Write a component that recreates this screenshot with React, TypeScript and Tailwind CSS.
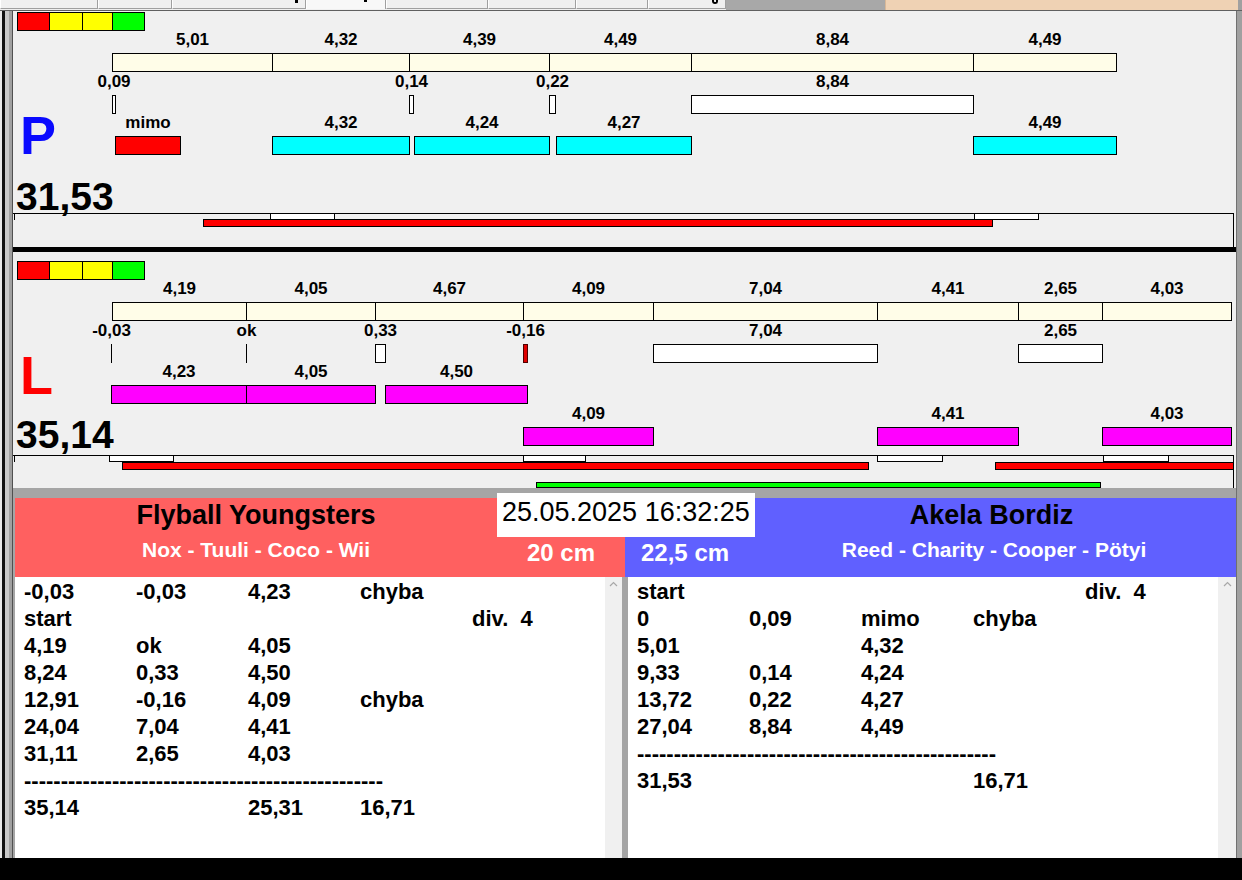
import React from 'react';

// left edge of the content area in page pixels; chart data is kept in page coordinates
const OX = 13;

type Kind = 'cream' | 'white' | 'cyan' | 'magenta' | 'red' | 'tinyred' | 'tick' | 'green' | 'line';

interface Item {
    a: number;
    b: number;
    y: number;
    h: number;
    kind: Kind;
    label?: string;
    ly?: number;
}

const kindClass: Record<Kind, string> = {
    cream: 'bg-[#fffde8] border border-black',
    white: 'bg-white border border-black',
    cyan: 'bg-[#00ffff] border border-black',
    magenta: 'bg-[#ff00ff] border border-black',
    red: 'bg-[#ff0000] border border-black',
    tinyred: 'bg-[#e00000] border border-[#500000]',
    tick: 'bg-black',
    green: 'bg-[#00ff00] border border-black',
    line: 'bg-black',
};

const row = (kind: Kind, y: number, ly: number, segs: [number, number, string?][]): Item[] =>
    segs.map(([a, b, label]) => ({ a, b, y, h: 19, kind, label, ly }));

const itemsP: Item[] = [
    ...row('cream', 53, 40, [
        [112, 272, '5,01'],
        [272, 409, '4,32'],
        [409, 549, '4,39'],
        [549, 691, '4,49'],
        [691, 973, '8,84'],
        [973, 1116, '4,49'],
    ]),
    ...row('white', 95, 82, [
        [112, 115, '0,09'],
        [409, 413, '0,14'],
        [549, 555, '0,22'],
        [691, 973, '8,84'],
    ]),
    ...row('red', 136, 123, [[115, 180, 'mimo']]),
    ...row('cyan', 136, 123, [
        [272, 409, '4,32'],
        [414, 549, '4,24'],
        [556, 691, '4,27'],
        [973, 1116, '4,49'],
    ]),
    // track
    { a: 13, b: 1233, y: 213, h: 1, kind: 'line' },
    { a: 1233, b: 1233, y: 213, h: 34, kind: 'line' },
    { a: 14, b: 14, y: 213, h: 7, kind: 'line' },
    { a: 270, b: 334, y: 213, h: 7, kind: 'white' },
    { a: 974, b: 1038, y: 213, h: 7, kind: 'white' },
    { a: 203, b: 992, y: 219, h: 8, kind: 'red' },
];

const itemsL: Item[] = [
    ...row('cream', 302, 289, [
        [112, 246, '4,19'],
        [246, 375, '4,05'],
        [375, 523, '4,67'],
        [523, 653, '4,09'],
        [653, 877, '7,04'],
        [877, 1018, '4,41'],
        [1018, 1102, '2,65'],
        [1102, 1231, '4,03'],
    ]),
    ...row('tick', 344, 331, [
        [111, 111, '-0,03'],
        [246, 246, 'ok'],
    ]),
    ...row('white', 344, 331, [[375, 385, '0,33']]),
    ...row('tinyred', 344, 331, [[523, 527, '-0,16']]),
    ...row('white', 344, 331, [
        [653, 877, '7,04'],
        [1018, 1102, '2,65'],
    ]),
    ...row('magenta', 385, 372, [
        [111, 246, '4,23'],
        [246, 375, '4,05'],
        [385, 527, '4,50'],
    ]),
    ...row('magenta', 427, 414, [
        [523, 653, '4,09'],
        [877, 1018, '4,41'],
        [1102, 1231, '4,03'],
    ]),
    // track
    { a: 13, b: 1233, y: 455, h: 1, kind: 'line' },
    { a: 1233, b: 1233, y: 455, h: 33, kind: 'line' },
    { a: 14, b: 14, y: 455, h: 7, kind: 'line' },
    { a: 109, b: 173, y: 455, h: 7, kind: 'white' },
    { a: 523, b: 585, y: 455, h: 7, kind: 'white' },
    { a: 877, b: 942, y: 455, h: 7, kind: 'white' },
    { a: 1103, b: 1168, y: 455, h: 7, kind: 'white' },
    { a: 122, b: 868, y: 462, h: 8, kind: 'red' },
    { a: 995, b: 1233, y: 462, h: 8, kind: 'red' },
    { a: 536, b: 1100, y: 482, h: 6, kind: 'green' },
];

const TrafficLight = () => (
    <div className="flex h-[19px] w-[128px] border border-black">
        <div className="w-[31px] bg-[#ff0000]" />
        <div className="w-[33px] bg-[#ffff00] border-l border-black" />
        <div className="w-[30px] bg-[#ffff00] border-l border-black" />
        <div className="flex-1 bg-[#00ff00] border-l border-black" />
    </div>
);

interface PanelProps {
    top: number;
    letter: string;
    letterClass: string;
    lightTop: number;
    letterMt: number;
    letterMl: number;
    total: string;
    totalMt: number;
    items: Item[];
}

const Panel: React.FC<PanelProps> = ({ top, letter, letterClass, lightTop, letterMt, letterMl, total, totalMt, items }) => (
    <div className="relative h-[236px] bg-[#f0f0f0]">
        <div className="flex flex-col items-start pl-[4px]" style={{ paddingTop: lightTop }}>
            <TrafficLight />
            <div
                className={`text-[54px] leading-[54px] font-bold ${letterClass}`}
                style={{ marginTop: letterMt, marginLeft: letterMl }}
            >
                {letter}
            </div>
            <div className="text-[39px] leading-[39px] font-bold text-black ml-[-1px]" style={{ marginTop: totalMt }}>
                {total}
            </div>
        </div>

        {items.map((it, i) => (
            <React.Fragment key={i}>
                <div
                    className={`absolute ${kindClass[it.kind]}`}
                    style={{ left: it.a - OX, top: it.y - top, width: it.b - it.a + 1, height: it.h }}
                />
                {it.label && it.ly !== undefined && (
                    <div
                        className="absolute w-[120px] text-center text-[17px] leading-[18px] font-bold text-black"
                        style={{ left: (it.a + it.b + 1) / 2 - 60 - OX, top: it.ly - 9 - top }}
                    >
                        {it.label}
                    </div>
                )}
            </React.Fragment>
        ))}
    </div>
);

const DASHES = '-'.repeat(49);

const leftRows: string[][] = [
    ['-0,03', '-0,03', '4,23', 'chyba'],
    ['start', '', '', '', 'div.  4'],
    ['4,19', 'ok', '4,05'],
    ['8,24', '0,33', '4,50'],
    ['12,91', '-0,16', '4,09', 'chyba'],
    ['24,04', '7,04', '4,41'],
    ['31,11', '2,65', '4,03'],
    [DASHES],
    ['35,14', '', '25,31', '16,71'],
];

const rightRows: string[][] = [
    ['start', '', '', '', 'div.  4'],
    ['0', '0,09', 'mimo', 'chyba'],
    ['5,01', '', '4,32'],
    ['9,33', '0,14', '4,24'],
    ['13,72', '0,22', '4,27'],
    ['27,04', '8,84', '4,49'],
    [DASHES],
    ['31,53', '', '', '16,71'],
];

const ResultList = ({ rows, pad }: { rows: string[][]; pad: string }) => (
    <div className={`w-[590px] bg-white pt-[1px] ${pad} text-[22px] leading-[27px] font-bold text-black`}>
        {rows.map((r, i) =>
            r.length === 1 ? (
                <div key={i} className="whitespace-nowrap overflow-hidden">{r[0]}</div>
            ) : (
                <div key={i} className="grid grid-cols-[112px_112px_112px_112px_112px] h-[27px]">
                    {[0, 1, 2, 3, 4].map((c) => (
                        <span key={c} className="whitespace-pre">{r[c] ?? ''}</span>
                    ))}
                </div>
            )
        )}
    </div>
);

const ScrollBar = ({ w }: { w: string }) => (
    <div className={`${w} bg-[#f0f0f0] flex justify-center pt-[4px]`}>
        <svg width="9" height="6" viewBox="0 0 9 6">
            <path d="M1 5 L4.5 1.5 L8 5" fill="none" stroke="#a8a8a8" strokeWidth="1.2" />
        </svg>
    </div>
);

const tabs = [98, 74, 134, 80, 102, 88, 72, 78];

const TopStrip = () => (
    <div className="relative flex h-[11px] border-b border-[#606060]">
        {tabs.map((w, i) => (
            <div
                key={i}
                className={`h-[9px] border-l border-white border-r border-r-[#a0a0a0] ${
                    i === 3 ? 'bg-[#f8f8f8]' : 'bg-[#f0f0f0] border-b border-b-[#a0a0a0]'
                }`}
                style={{ width: w }}
            />
        ))}
        <div className="w-[159px] h-[10px] bg-[#a8a8a8]" />
        <div className="flex-1 h-[10px] bg-[#efd2b4] border-l border-[#d8b898]" />
        <div className="w-[4px] h-[10px] bg-[#a0a0a0]" />
        {/* cut-off glyph descenders of the tab captions */}
        <div className="absolute left-[295px] top-0 w-[3px] h-[3px] bg-black" />
        <div className="absolute left-[364px] top-0 w-[3px] h-[2px] bg-black" />
        <div className="absolute left-[712px] top-0 w-[6px] h-[4px] rounded-b-[3px] border-b-2 border-x-2 border-black" />
    </div>
);

export default function App() {
    return (
        <div className="relative w-[1242px] h-[880px] overflow-hidden bg-[#f0f0f0] flex flex-col font-['Liberation_Sans',Arial,sans-serif]">
            <TopStrip />

            <div className="flex h-[847px]">
                {/* left window frame */}
                <div className="flex w-[13px]">
                    <div className="w-[2px] bg-[#e8e8e8]" />
                    <div className="w-[3px] bg-[#101010]" />
                    <div className="w-[4px] bg-[#c8c8c8]" />
                    <div className="w-[3px] bg-[#a0a0a0]" />
                    <div className="w-[1px] bg-[#505050]" />
                </div>

                <div className="w-[1223px] flex flex-col">
                    <Panel
                        top={11}
                        letter="P"
                        letterClass="text-[#0a0aff]"
                        lightTop={1}
                        letterMt={77}
                        letterMl={3}
                        total="31,53"
                        totalMt={15}
                        items={itemsP}
                    />
                    <div className="h-[5px] bg-black" />
                    <Panel
                        top={252}
                        letter="L"
                        letterClass="text-[#ff0000]"
                        lightTop={9}
                        letterMt={68}
                        letterMl={3}
                        total="35,14"
                        totalMt={13}
                        items={itemsL}
                    />
                    <div className="h-[10px] bg-[#a5a5a5]" />

                    {/* team headers */}
                    <div className="flex h-[79px] pl-[2px] bg-[#a5a5a5]">
                        <div className="w-[610px] bg-[#ff6060] flex flex-col">
                            <div className="w-[482px] h-[34px] leading-[34px] text-center text-[27px] font-bold text-black">
                                Flyball Youngsters
                            </div>
                            <div className="flex h-[36px] items-center">
                                <div className="w-[482px] text-center text-[21px] leading-[24px] font-bold text-white">
                                    Nox - Tuuli - Coco - Wii
                                </div>
                                <div className="ml-[30px] mt-[5px] text-[24px] leading-[28px] font-bold text-white">20 cm</div>
                            </div>
                        </div>
                        <div className="w-[611px] bg-[#6060ff] flex flex-col">
                            <div className="ml-[130px] w-[473px] h-[34px] leading-[34px] text-center text-[27px] font-bold text-black">
                                Akela Bordiz
                            </div>
                            <div className="flex h-[36px] items-center">
                                <div className="w-[130px] pl-[16px] mt-[5px] text-[24px] leading-[28px] font-bold text-white">
                                    22,5 cm
                                </div>
                                <div className="w-[478px] text-center text-[21px] leading-[24px] font-bold text-white">
                                    Reed - Charity - Cooper - Pötyi
                                </div>
                            </div>
                        </div>
                    </div>

                    {/* result lists */}
                    <div className="flex h-[281px] pl-[2px] bg-[#a5a5a5]">
                        <ResultList rows={leftRows} pad="pl-[9px]" />
                        <ScrollBar w="w-[17px]" />
                        <div className="w-[6px] bg-[#a5a5a5]" />
                        <ResultList rows={rightRows} pad="pl-[9px]" />
                        <ScrollBar w="w-[18px]" />
                    </div>
                </div>

                {/* right window frame */}
                <div className="flex w-[6px]">
                    <div className="w-[1px] bg-[#707070]" />
                    <div className="flex-1 bg-[#a0a0a0]" />
                </div>
            </div>

            <div className="h-[22px] bg-black" />

            {/* timestamp box sitting over the headers */}
            <div className="absolute left-[497px] top-[493px] w-[258px] h-[44px] bg-white pl-[5px] pt-[2px] text-[27px] leading-[34px] text-black">
                25.05.2025 16:32:25
            </div>
        </div>
    );
}
